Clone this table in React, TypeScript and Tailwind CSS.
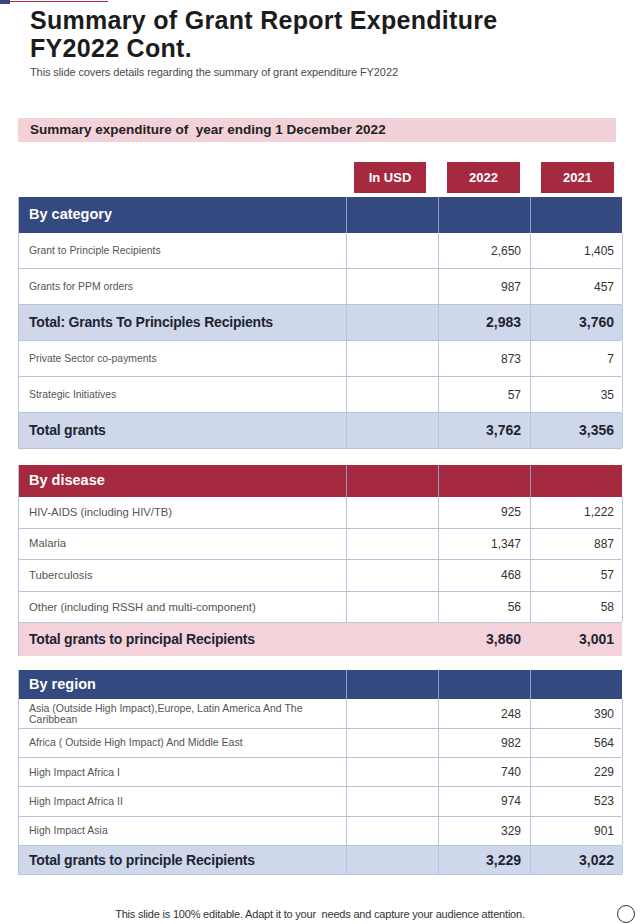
type Row = { label: string; a: string; b: string; total?: boolean };

interface Section {
    title: string;
    head: string;
    total: string;
    headH: string;
    rows: Row[];
}

const sections: Section[] = [
    {
        title: 'By category',
        head: 'bg-[#34497f]',
        total: 'bg-[#cfd8ea]',
        headH: 'h-[36px]',
        rows: [
            { label: 'Grant to Principle Recipients', a: '2,650', b: '1,405' },
            { label: 'Grants for PPM orders', a: '987', b: '457' },
            { label: 'Total: Grants To Principles Recipients', a: '2,983', b: '3,760', total: true },
            { label: 'Private Sector co-payments', a: '873', b: '7' },
            { label: 'Strategic Initiatives', a: '57', b: '35' },
            { label: 'Total grants', a: '3,762', b: '3,356', total: true },
        ],
    },
    {
        title: 'By disease',
        head: 'bg-[#a5293f]',
        total: 'bg-[#f3d2d9]',
        headH: 'h-[32px]',
        rows: [
            { label: 'HIV-AIDS (including HIV/TB)', a: '925', b: '1,222' },
            { label: 'Malaria', a: '1,347', b: '887' },
            { label: 'Tuberculosis', a: '468', b: '57' },
            { label: 'Other (including RSSH and multi-component)', a: '56', b: '58' },
            { label: 'Total grants to principal Recipients', a: '3,860', b: '3,001', total: true },
        ],
    },
    {
        title: 'By region',
        head: 'bg-[#34497f]',
        total: 'bg-[#cfd8ea]',
        headH: 'h-[29px]',
        rows: [
            { label: 'Asia (Outside High Impact),Europe, Latin America And The Caribbean', a: '248', b: '390' },
            { label: 'Africa ( Outside High Impact) And Middle East', a: '982', b: '564' },
            { label: 'High Impact Africa I', a: '740', b: '229' },
            { label: 'High Impact Africa II', a: '974', b: '523' },
            { label: 'High Impact Asia', a: '329', b: '901' },
            { label: 'Total grants to principle Recipients', a: '3,229', b: '3,022', total: true },
        ],
    },
];

const rowH = ['h-[36px]', 'h-[31.6px]', 'h-[29.3px]'];
const totalH = ['h-[36px]', 'h-[33px]', 'h-[29.5px]'];
const labelSize = ['text-[10.4px]', 'text-[11.3px]', 'text-[10.5px]'];

function Table({ s, idx }: { s: Section; idx: number }) {
    const cols = 'grid grid-cols-[328px_92px_92px_92px]';
    return (
        <div className="w-[604px] border-l border-[#b9c4dc]">
            <div className={`${cols} ${s.head} ${s.headH}`}>
                <div className="flex items-center pl-[10px] text-[14.5px] font-bold text-white border-r border-[#8e9fc7]">{s.title}</div>
                <div className="border-r border-[#8e9fc7]" />
                <div className="border-r border-[#8e9fc7]" />
                <div />
            </div>
            {s.rows.map((r, i) => {
                const bg = r.total ? s.total : 'bg-white';
                const line = r.total && idx === 1 ? 'border-transparent' : 'border-[#b9c4dc]';
                const num = r.total ? 'text-[14px] font-bold text-[#1e2433]' : 'text-[12px] text-[#333]';
                return (
                    <div key={i} className={`${cols} ${bg} ${r.total ? totalH[idx] : rowH[idx]} border-b ${line}`}>
                        {r.total ? (
                            <div className={`flex items-center pl-[10px] text-[14px] font-bold text-[#1e2433] tracking-[-0.2px] border-r ${line}`}>{r.label}</div>
                        ) : (
                            <div className={`flex items-center pl-[10px] pr-[28px] ${labelSize[idx]} leading-[11px] text-[#555] border-r ${line}`}>{r.label}</div>
                        )}
                        <div className={`border-r ${line}`} />
                        <div className={`flex items-center justify-end pr-[9px] border-r ${line} ${num}`}>{r.a}</div>
                        <div className={`flex items-center justify-end pr-[8px] border-r ${line} ${num}`}>{r.b}</div>
                    </div>
                );
            })}
        </div>
    );
}

export default function App() {
    return (
        <div className="w-[640px] h-[924px] bg-white font-['Liberation_Sans',Arial,sans-serif] flex flex-col">
            <div className="flex h-[4px]">
                <div className="w-[10px] h-[4px] bg-[#34497f]" />
                <div className="w-[98px] h-[1px] mt-[1px] bg-[#a5293f]" />
            </div>

            <div className="pl-[30px] mt-[2px]">
                <h1 className="text-[25px] leading-[28px] font-bold text-[#1c1c1c] tracking-[0.3px]">
                    Summary of Grant Report Expenditure<br />FY2022 Cont.
                </h1>
                <p className="mt-[4px] text-[11px] leading-[12px] text-[#4a4a4a] tracking-[-0.1px]">
                    This slide covers details regarding the summary of grant expenditure FY2022
                </p>
            </div>

            <div className="ml-[18px] mt-[40px] w-[598px] h-[24px] bg-[#f3d1d8] flex items-center pl-[12px] text-[13.5px] font-bold text-[#222]">
                Summary expenditure of&nbsp; year ending 1 December 2022
            </div>

            <div className="ml-[354px] mt-[20px] flex gap-[21px] h-[31px]">
                <div className="w-[72px] bg-[#a5293f] text-white text-[13px] font-bold flex items-center justify-center">In USD</div>
                <div className="w-[73px] bg-[#a5293f] text-white text-[13px] font-bold flex items-center justify-center">2022</div>
                <div className="w-[73px] bg-[#a5293f] text-white text-[13px] font-bold flex items-center justify-center">2021</div>
            </div>

            <div className="ml-[18px] mt-[4px] flex flex-col gap-[16px]">
                {sections.map((s, i) => (
                    <div key={i} className={i === 2 ? '-mt-[2px]' : ''}>
                        <Table s={s} idx={i} />
                    </div>
                ))}
            </div>

            <div className="relative mt-auto mb-0 h-[20px] flex items-center justify-center">
                <span className="text-[11px] text-[#333] tracking-[-0.2px] whitespace-pre">
                    This slide is 100% editable. Adapt it to your  needs and capture your audience attention.
                </span>
                <div className="absolute right-[5px] top-[1px] w-[18px] h-[18px] rounded-full border-[1.5px] border-[#333]" />
            </div>
        </div>
    );
}
